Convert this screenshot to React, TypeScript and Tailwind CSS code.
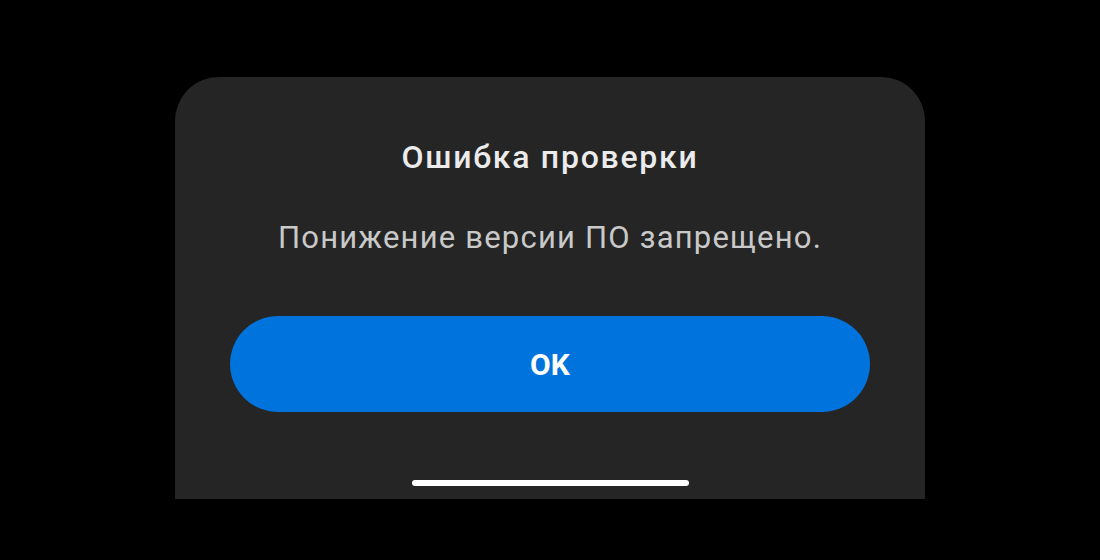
export default function App() {
  return (
    <div className="w-[1100px] h-[560px] bg-black overflow-hidden font-['Roboto','Noto_Sans',sans-serif]">
      <div className="mx-auto mt-[77px] w-[750px] h-[422px] bg-[#252525] rounded-t-[44px] flex flex-col items-center pt-[62px]">
        <h1 className="h-[36px] leading-[36px] text-[32px] font-medium tracking-[1.75px] text-[#ebebeb]">Ошибка проверки</h1>
        <p className="mt-[45px] h-[36px] leading-[36px] text-[31px] tracking-[1.2px] text-[#c9c9c9]">Понижение версии ПО запрещено.</p>
        <button className="mt-[60px] w-[640px] h-[96px] rounded-full bg-[#0073dc] text-white text-[30px] font-bold">OK</button>
        <div className="mt-[68px] w-[277px] h-[6px] rounded-full bg-white" />
      </div>
    </div>
  );
}
